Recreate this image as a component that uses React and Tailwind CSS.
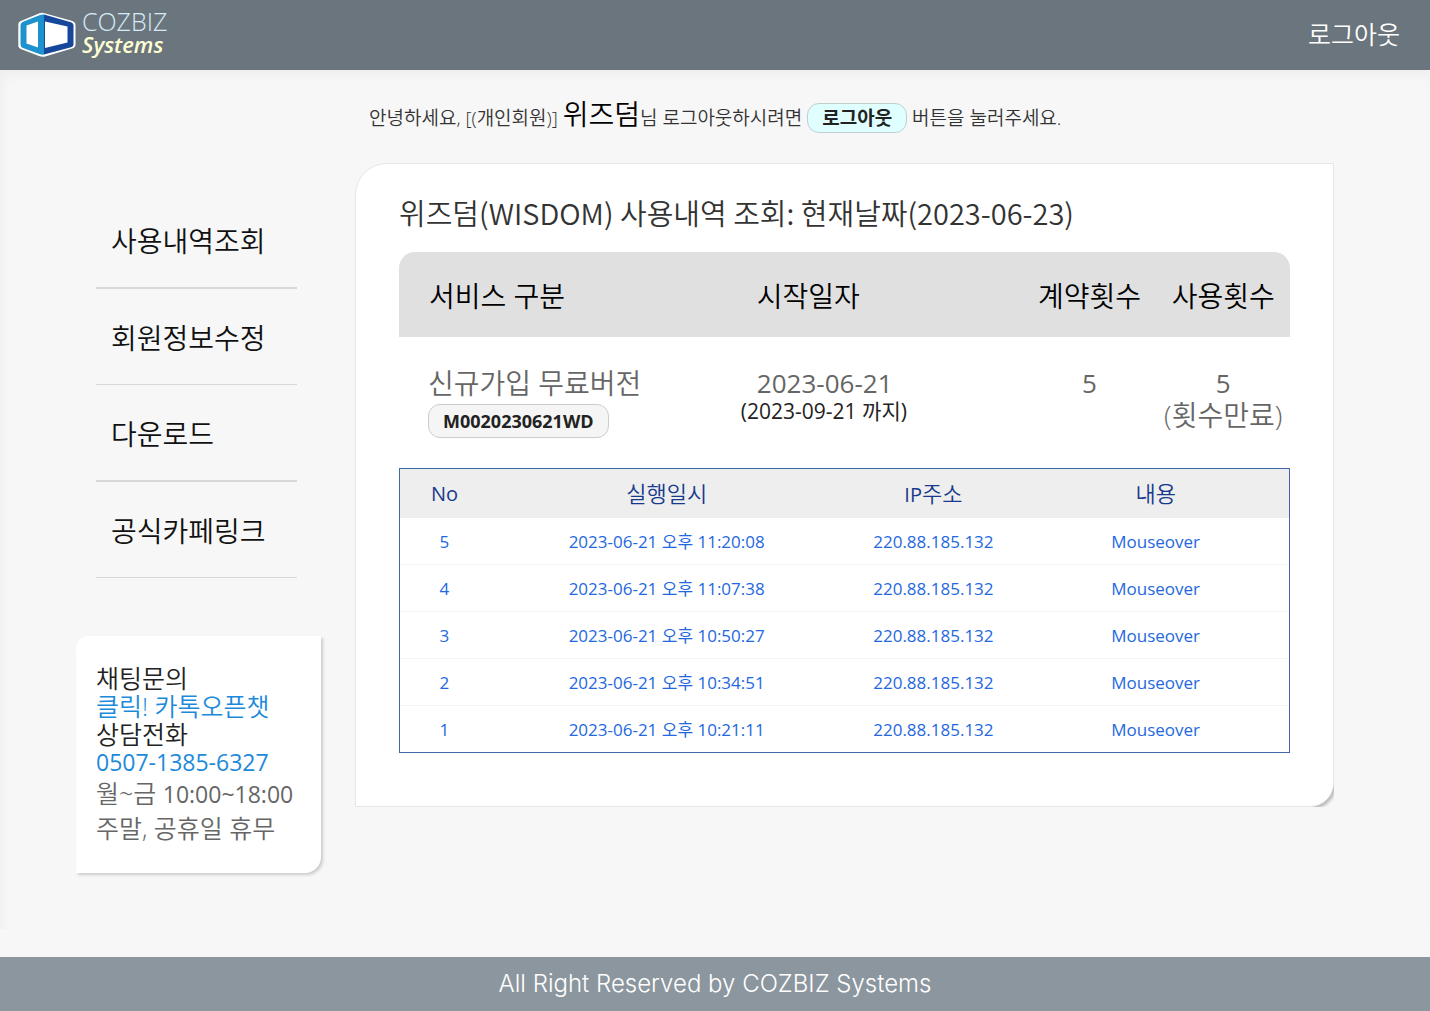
const menuItems = [
  "사용내역조회",
  "회원정보수정",
  "다운로드",
  "공식카페링크",
];

const logs = [
  { no: 5, date: "2023-06-21 오후 11:20:08", ip: "220.88.185.132", content: "Mouseover" },
  { no: 4, date: "2023-06-21 오후 11:07:38", ip: "220.88.185.132", content: "Mouseover" },
  { no: 3, date: "2023-06-21 오후 10:50:27", ip: "220.88.185.132", content: "Mouseover" },
  { no: 2, date: "2023-06-21 오후 10:34:51", ip: "220.88.185.132", content: "Mouseover" },
  { no: 1, date: "2023-06-21 오후 10:21:11", ip: "220.88.185.132", content: "Mouseover" },
];

const Logo = () => (
  <a href="#" className="flex items-center gap-1.5">
    <svg width="58" height="46" viewBox="0 0 58 46" aria-hidden="true">
      <path
        d="M21.500 1.200Q24 .2 26.500 1.200L53.500 8.800Q57.500 10 57.500 13V32.500Q57.500 35.500 54 36.600L28 44.200Q24.500 45.400 21 44L4 37.600Q.3 36.300 .3 33.500V12.500Q.3 9.800 4 8.600Z"
        fill="#fff"
      />
      <path d="M26 2.500Q24 2.200 22 3L5 9.800Q2.500 11 2.500 13.500V32.500Q2.500 35 5 36L22 42.300Q24 43 26 42.600Z" fill="#1d92cf" />
      <path d="M26 2.500L53 10.200Q55.500 11.200 55.500 13.500V32.500Q55.500 34.500 53 35.200L26 42.600Z" fill="#17479a" />
      <path d="M20 9.500V35.500L8.500 31.500V13.500Z" fill="#fff" />
      <path d="M27 9.500L49.500 14.500V30.500L27 36Z" fill="#fff" />
    </svg>
    <span className="flex flex-col pb-1.5">
      <span className="font-['Open_Sans'] text-[25px] leading-6 font-light text-[#d5ebf5]">
        COZBIZ
      </span>
      <span className="font-['Open_Sans'] text-[22px] leading-[22px] font-semibold text-[#ffffd5] italic">
        Systems
      </span>
    </span>
  </a>
);

const Sidebar = () => (
  <aside className="w-[245px] shrink-0 pt-[29px]">
    <nav className="mr-6 ml-5">
      <ul>
        {menuItems.map((item) => (
          <li key={item} className="border-b border-[#d8d8d8] odd:border-b-2">
            <a
              href="#"
              className="block px-[15px] pt-[29px] pb-[26px] text-[28px] leading-10 text-[#111]"
            >
              {item}
            </a>
          </li>
        ))}
      </ul>
    </nav>

    {/* Contact box */}
    <div className="mt-[58px] rounded-tl-xl rounded-br-2xl bg-white px-5 py-7 text-[25px] leading-7 shadow-[2px_2px_3px_#ccc]">
      <p className="text-[#222]">채팅문의</p>
      <a href="#" className="block text-[#1c8adb]">
        클릭! 카톡오픈챗
      </a>
      <p className="text-[#222]">상담전화</p>
      <a href="tel:0507-1385-6327" className="block text-[23px] font-normal text-[#1c8adb]">
        0507-1385-6327
      </a>
      <p className="leading-[34px] whitespace-nowrap text-[#666]">
        월~금 <span className="text-[23px] font-normal">10:00~18:00</span>
      </p>
      <p className="leading-[34px] whitespace-nowrap text-[#666]">주말, 공휴일 휴무</p>
    </div>
  </aside>
);

const Usage = () => (
  <table className="w-full table-fixed">
    <thead>
      <tr className="text-[28px] leading-[81px] text-black">
        <th className="w-[35%] rounded-tl-2xl bg-[#e0e0e0] pt-1 pl-[30px] text-left font-[350]">
          서비스 구분
        </th>
        <th className="w-[35%] bg-[#e0e0e0] pt-1 pl-[46px] text-left font-[350]">시작일자</th>
        <th className="w-[15%] bg-[#e0e0e0] pt-1 font-[350]">계약횟수</th>
        <th className="w-[15%] rounded-tr-2xl bg-[#e0e0e0] pt-1 font-[350]">사용횟수</th>
      </tr>
    </thead>
    <tbody>
      <tr className="align-top text-[26px] leading-8 text-[#666]">
        <td className="pt-[30px] pb-[30px] pl-[29px]">
          <p className="text-[28px]">신규가입 무료버전</p>
          <button
            type="button"
            className="mt-[5px] block rounded-xl border border-[#ccc] bg-[#f5f5f5] px-3.5 py-1 font-['Open_Sans'] text-lg leading-6 font-bold text-[#222]"
          >
            M0020230621WD
          </button>
        </td>
        <td className="pt-[30px] pl-[30px]">
          <p className="pl-4 font-normal">2023-06-21</p>
          <p className="text-[21px] leading-6 font-normal text-[#222]">(2023-09-21 까지)</p>
        </td>
        <td className="pt-[30px] text-center font-normal">5</td>
        <td className="pt-[30px] text-center whitespace-nowrap">
          <p className="font-normal">5</p>
          <p className="text-[28px]">(횟수만료)</p>
        </td>
      </tr>
    </tbody>
  </table>
);

const Logs = () => (
  <div className="border border-[#4267a8]">
    <table className="w-full table-fixed text-center">
      <thead>
        <tr className="bg-[#eee] text-[22px] leading-[49px] text-[#173a8c]">
          <th className="w-[10%] text-xl leading-[49px] font-normal">No</th>
          <th className="w-[40%] font-[350]">실행일시</th>
          <th className="w-[20%] font-[350]">
            <span className="text-xl font-normal">IP</span>주소
          </th>
          <th className="w-[30%] font-[350]">내용</th>
        </tr>
      </thead>
      <tbody>
        {logs.map((log) => (
          <tr
            key={log.no}
            className="border-b border-[#f3f3f3] text-[17px] leading-[44px] font-normal text-[#2468e0] last:border-b-0"
          >
            <td className="pt-0.5">{log.no}</td>
            <td className="pt-0.5">{log.date}</td>
            <td className="pt-0.5">{log.ip}</td>
            <td className="pt-0.5">{log.content}</td>
          </tr>
        ))}
      </tbody>
    </table>
  </div>
);

const App = () => {
  return (
    <div className="flex min-h-screen flex-col bg-[#f7f7f7] font-['Open_Sans','Noto_Sans_CJK_KR',sans-serif] font-[350]">
      <header className="flex h-[70px] items-center justify-between bg-[#6b757d] pr-[30px] pl-[18px]">
        <Logo />
        <a href="#" className="text-[25px] text-white">
          로그아웃
        </a>
      </header>

      <div className="mb-7 flex-1 pt-6 pr-24 pb-10 pl-[76px] shadow-[inset_3px_6px_10px_#efefef]">
        <div className="pl-[293px] text-[19px] leading-10 text-[#333]">
          안녕하세요, [(개인회원)] <span className="text-[28px] text-black">위즈덤</span>님
          로그아웃하시려면{" "}
          <button
            type="button"
            className="rounded-xl border border-[#bfcfcf] bg-[#e0ffff] px-3.5 text-[19px] leading-7 font-bold text-[#222]"
          >
            로그아웃
          </button>{" "}
          버튼을 눌러주세요.
        </div>

        <div className="mt-[25px] flex items-start gap-[34px]">
          <Sidebar />
          <div className="min-w-0 flex-1 overflow-hidden">
            <main className="rounded-tl-[32px] rounded-br-3xl border border-[#e6e6e6] bg-white px-[43px] pt-[26px] pb-[53px] shadow-[2px_2px_3px_#bbb]">
              <h1 className="mb-[18px] font-['Noto_Sans_CJK_KR',sans-serif] text-[29px] leading-[44px] text-[#333]">
                위즈덤(WISDOM) 사용내역 조회: 현재날짜(2023-06-23)
              </h1>
              <Usage />
              <Logs />
            </main>
          </div>
        </div>
      </div>

      <footer className="bg-[#8c969e] text-center font-['Inter'] text-2xl leading-[54px] font-light text-white">
        All Right Reserved by COZBIZ Systems
      </footer>
    </div>
  );
};

export default App;
